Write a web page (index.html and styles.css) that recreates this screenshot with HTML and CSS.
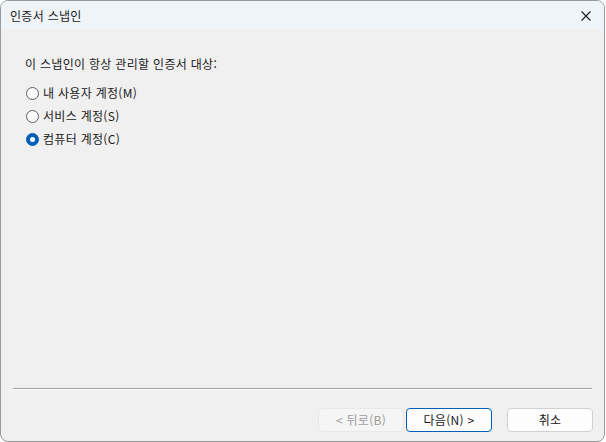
FILE: index.html
```html
<!DOCTYPE html>
<html lang="ko">
<head>
<meta charset="utf-8">
<title>인증서 스냅인</title>
<link rel="stylesheet" href="styles.css">
</head>
<body>
<div class="window">
  <div class="titlebar">
    <span class="title">인증서 스냅인</span>
    <span class="close">
      <svg width="10" height="10" viewBox="0 0 10 10"><path d="M0.5 0.5 L9.5 9.5 M9.5 0.5 L0.5 9.5" stroke="#1a1a1a" stroke-width="1.1" fill="none"/></svg>
    </span>
  </div>
  <div class="content">
    <div class="prompt">이 스냅인이 항상 관리할 인증서 대상:</div>
    <div class="options">
      <label class="option"><span class="radio"></span><span>내 사용자 계정(M)</span></label>
      <label class="option"><span class="radio"></span><span>서비스 계정(S)</span></label>
      <label class="option"><span class="radio checked"></span><span>컴퓨터 계정(C)</span></label>
    </div>
  </div>
  <div class="separator"></div>
  <div class="footer">
    <div class="btn disabled">&lt; 뒤로(B)</div>
    <div class="btn primary">다음(N) &gt;</div>
    <div class="btn cancel">취소</div>
  </div>
</div>
</body>
</html>
```
FILE: styles.css
```css
html, body {
  margin: 0;
  padding: 0;
  background: #ffffff;
}
body {
  font-family: "Noto Sans CJK KR", "Noto Sans", sans-serif;
  font-size: 12px;
  letter-spacing: 0.3px;
  color: #1a1a1a;
}
.window {
  box-sizing: border-box;
  width: 605px;
  height: 442px;
  border: 1px solid #9a9a9a;
  border-radius: 8px;
  background: #f0f0f0;
  display: flex;
  flex-direction: column;
  overflow: hidden;
}
.titlebar {
  height: 29px;
  flex: none;
  background: #eff4f9;
  display: flex;
  align-items: center;
  justify-content: space-between;
  padding: 0 10px 0 9px;
}
.title {
  line-height: 16px;
  color: #1a1a1a;
}
.close {
  width: 10px;
  height: 10px;
  display: flex;
  margin-right: 3px;
}
.content {
  flex: 1;
  padding: 26px 24px 0 24px;
}
.prompt {
  line-height: 16px;
}
.options {
  display: flex;
  flex-direction: column;
  gap: 7px;
  margin-top: 13px;
}
.option {
  display: flex;
  align-items: center;
  gap: 4px;
  line-height: 16px;
  height: 16px;
}
.radio {
  box-sizing: border-box;
  width: 13px;
  height: 13px;
  border-radius: 50%;
  border: 1px solid #5d5d5d;
  background: #fbfbfb;
  flex: none;
  margin-left: 1px;
  display: flex;
  align-items: center;
  justify-content: center;
}
.radio.checked {
  background: #005fb8;
  border-color: #005fb8;
}
.radio.checked::after {
  content: "";
  width: 5px;
  height: 5px;
  border-radius: 50%;
  background: #ffffff;
}
.separator {
  flex: none;
  margin: 0 12px 0 12px;
  border-top: 1px solid #a0a0a0;
  border-bottom: 1px solid #ffffff;
  height: 0;
}
.footer {
  flex: none;
  display: flex;
  justify-content: flex-end;
  align-items: center;
  padding: 18px 11px 9px 0;
}
.btn {
  box-sizing: border-box;
  width: 86px;
  height: 24px;
  border-radius: 4px;
  border: 1px solid #d1d1d1;
  background: #fdfdfd;
  display: flex;
  align-items: center;
  justify-content: center;
  line-height: 16px;
}
.btn.disabled {
  background: #f5f5f5;
  border-color: #e8e8e8;
  color: #9d9d9d;
}
.btn.primary {
  margin-left: 2px;
  border-color: #005fb8;
  background: #fdfdfd;
}
.btn.cancel {
  margin-left: 15px;
}
```
